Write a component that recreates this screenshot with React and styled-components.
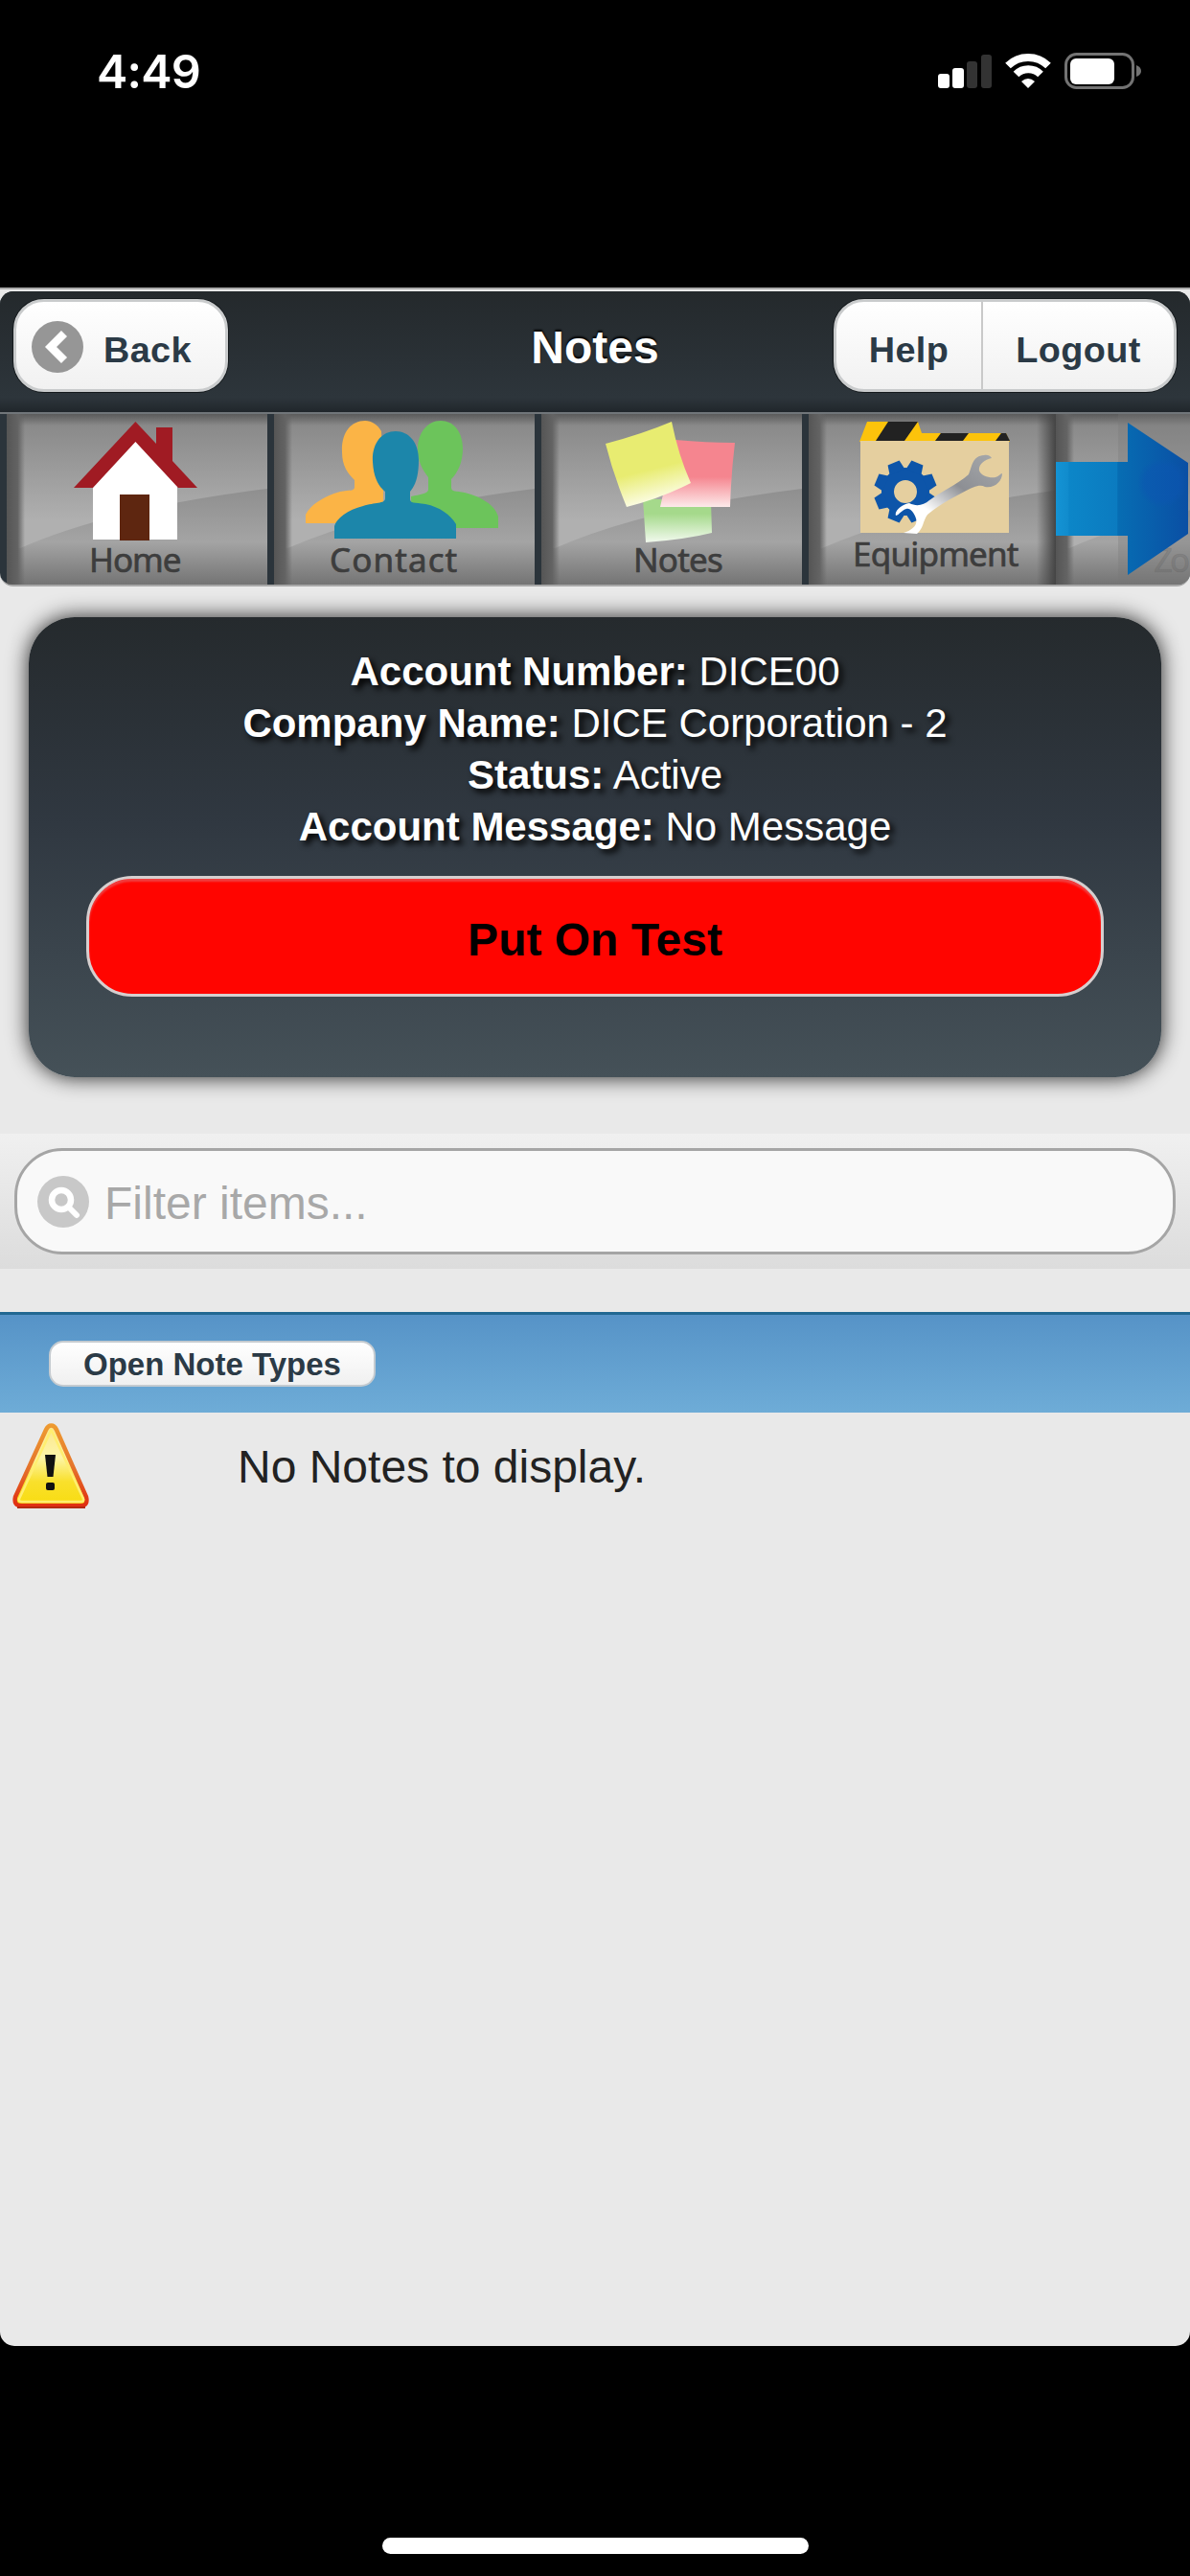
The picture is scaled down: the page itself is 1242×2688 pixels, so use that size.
import React from 'react';
import styled, { createGlobalStyle } from 'styled-components';

const Global = createGlobalStyle`
  * { box-sizing: border-box; }
  body { margin: 0; background: #000; }
`;

const Screen = styled.div`
  width: 1242px;
  height: 2688px;
  background: #000;
  display: flex;
  flex-direction: column;
  font-family: "Liberation Sans", Arial, sans-serif;
  overflow: hidden;
`;

const StatusBar = styled.div`
  height: 300px;
  flex: none;
  display: flex;
  justify-content: space-between;
  align-items: flex-start;
  padding: 46px 49px 0 101px;
`;
const Clock = styled.div`
  font: 600 48.5px/58px Inter, sans-serif;
  letter-spacing: -0.8px;
  color: #fff;
`;
const StatusIcons = styled.svg`
  display: block;
  margin-top: 8px;
`;

const Page = styled.main`
  height: 2148px;
  flex: none;
  background: #e9e9e9;
  border-radius: 0 0 15px 15px;
  padding-top: 2px;
  border-top: 2px solid #aaa;
`;

const TopPanel = styled.section`
  height: 308px;
  border-radius: 14px;
  overflow: hidden;
  background: #2b343b;
  border-bottom: 2px solid #a8a8a8;
`;
const Header = styled.header`
  height: 126px;
  padding: 8px 14px 0;
  display: grid;
  grid-template-columns: 1fr auto 1fr;
  align-items: start;
  background: linear-gradient(#24292c, #2d353b 88%, #20262b);
`;
const Title = styled.h1`
  margin: 23px 0 0;
  font-size: 48px;
  line-height: 56px;
  font-weight: 700;
  color: #fff;
  text-shadow: 0 -2px 2px #000;
`;
const ButtonGroup = styled.div`
  display: flex;
  width: max-content;
  height: 97px;
  border: 3px solid #c9cbcc;
  border-radius: 32px;
  overflow: hidden;
  background: linear-gradient(#fff, #f1f1f1);
  box-shadow: 0 0 0 1px #14191c;
  justify-self: ${(p) => p.$side};
`;
const HeaderButton = styled.button`
  width: ${(p) => p.$width}px;
  border: 0;
  border-left: ${(p) => (p.$divided ? '2px solid #c9c9c9' : '0')};
  padding: 8px 0 0;
  background: none;
  display: flex;
  align-items: center;
  justify-content: ${(p) => (p.$icon ? 'flex-start' : 'center')};
  gap: 21px;
  padding-left: ${(p) => (p.$icon ? '16px' : '0')};
  font: 700 37.8px/44px "Liberation Sans", Arial, sans-serif;
  letter-spacing: 0.4px;
  color: #2b3a46;
  svg { margin-top: -6px; }
`;

const Tiles = styled.nav`
  height: 180px;
  display: flex;
  padding-left: 7px;
  border-top: 2px solid #71767a;
`;
const Tile = styled.a`
  position: relative;
  flex: none;
  width: ${(p) => p.$width}px;
  height: 178px;
  margin-right: ${(p) => (p.$flush ? 0 : 7)}px;
  overflow: hidden;
  background: #909090;
`;
const Backdrop = styled.svg`
  position: absolute;
  inset: 0;
`;
const TileIcon = styled.svg`
  position: relative;
  display: block;
`;
const TileLabel = styled.span`
  position: absolute;
  left: ${(p) => p.$x}px;
  top: ${(p) => p.$y}px;
  font: 400 35px/48px "Noto Sans", "Open Sans", sans-serif;
  letter-spacing: ${(p) => p.$spacing}px;
  -webkit-text-stroke: 0.7px;
  color: ${(p) => (p.$faded ? 'rgba(70, 70, 70, 0.2)' : '#3d3d3d')};
  white-space: nowrap;
`;

const AccountCard = styled.section`
  margin: 32px 30px 0;
  height: 480px;
  border-radius: 48px;
  padding: 30px 60px 0;
  background: linear-gradient(#252a2d, #303841 45%, #455158);
  box-shadow: 0 0 22px #222;
  display: flex;
  flex-direction: column;
`;
const AccountLine = styled.div`
  font-size: 42px;
  line-height: 54px;
  text-align: center;
  color: #fff;
  text-shadow: 4px 4px 6px #000;
`;
const TestButton = styled.button`
  margin-top: 24px;
  height: 126px;
  border: 3px solid #d6cfcf;
  border-radius: 48px;
  background: #ff0500;
  box-shadow: inset 0 3px 2px #f04040;
  font: 700 48px/56px "Liberation Sans", Arial, sans-serif;
  color: #000;
  padding: 8px 0 0;
`;

const FilterBar = styled.form`
  margin-top: 59px;
  height: 141px;
  padding: 15px 15px 0;
  background: linear-gradient(#f0f0f0, #dcdcdc);
`;
const FilterField = styled.label`
  height: 111px;
  border: 3px solid #a5a5a5;
  border-radius: 50px;
  background: #f9f9f9;
  display: flex;
  align-items: center;
  gap: 16px;
  padding-left: 21px;
`;
const FilterInput = styled.input`
  flex: 1;
  border: 0;
  padding: 5px 0 0;
  background: none;
  outline: none;
  font: 400 48px/56px "Liberation Sans", Arial, sans-serif;
  &::placeholder { color: #a8a8a8; opacity: 1; }
`;

const NoteToolbar = styled.div`
  margin-top: 45px;
  height: 105px;
  border-top: 3px solid #226892;
  background: linear-gradient(#5693c7, #6eacd7);
  padding: 27px 51px 0;
`;
const NoteTypesButton = styled.button`
  display: block;
  width: 341px;
  height: 48px;
  border: 2px solid #c5cbd0;
  border-radius: 15px;
  background: linear-gradient(#fff, #f0f0f0);
  font: 700 33px/40px "Liberation Sans", Arial, sans-serif;
  color: #2b3a46;
  padding: 2px 0 0;
`;
const EmptyRow = styled.div`
  display: flex;
  padding: 9px 12px;
  gap: 154px;
`;
const EmptyText = styled.p`
  margin: 20px 0 0;
  font-size: 48px;
  line-height: 56px;
  color: #222;
`;
const BottomArea = styled.footer`
  flex: 1;
  display: flex;
  justify-content: center;
  align-items: flex-end;
  padding-bottom: 23px;
`;
const HomeIndicator = styled.div`
  width: 445px;
  height: 17px;
  border-radius: 9px;
  background: #fff;
`;

const TileBackdrop = ({ id, width, shaded }) => (
  <Backdrop width={width} height="178" viewBox={`0 0 ${width} 178`}>
    <defs>
      <linearGradient id={`${id}-gloss`} x1="0" y1="0" x2="0" y2="1">
        <stop offset="0" stopColor="#858585" />
        <stop offset="0.8" stopColor="#b0b0b0" />
      </linearGradient>
      <linearGradient id={`${id}-base`} x1="0" y1="0" x2="0" y2="1">
        <stop offset="0" stopColor="#858585" />
        <stop offset="0.4" stopColor="#8c8c8c" />
        <stop offset="0.75" stopColor="#a4a4a4" />
        <stop offset="1" stopColor="#747474" />
      </linearGradient>
      <linearGradient id={`${id}-left`}>
        <stop offset="0" stopColor="#555" />
        <stop offset="0.6" stopColor="#636363" />
        <stop offset="1" stopColor="#636363" stopOpacity="0" />
      </linearGradient>
      <linearGradient id={`${id}-top`} x1="0" y1="0" x2="0" y2="1">
        <stop offset="0" stopColor="#5c5c5c" />
        <stop offset="1" stopColor="#5c5c5c" stopOpacity="0" />
      </linearGradient>
      <linearGradient id={`${id}-right`}>
        <stop offset="0" stopColor="#444" stopOpacity="0" />
        <stop offset="1" stopColor="#444" />
      </linearGradient>
    </defs>
    <rect width={width} height="178" fill={`url(#${id}-base)`} />
    <path d="M0 0H272V78Q110 98 14 140H0Z" fill={`url(#${id}-gloss)`} />
    <rect width={width} height="12" fill={`url(#${id}-top)`} />
    <rect width="19" height="178" fill={`url(#${id}-left)`} />
    {shaded && <rect x={width - 20} width="20" height="178" fill={`url(#${id}-right)`} />}
  </Backdrop>
);

const HomeIcon = () => (
  <TileIcon width="272" height="178" viewBox="7 432 272 178">
    <path d="M97 506L141 458L185 506V563H97Z" fill="#fff" />
    <path d="M77 509L141.400 440L163 463V446H180V481L206 509H186L141.400 461L97 509Z" fill="#a01b23" />
    <rect x="125" y="516" width="31" height="48" fill="#5e2610" />
  </TileIcon>
);

const ContactIcon = () => (
  <TileIcon width="272" height="178" viewBox="286 432 272 178">
    <path d="M381 439C366 439 356 452 357 472C357 486 363 494 370 501V508C370 513 365 511 355 513C337 518 324 527 319 537V546H400V512L398 450C394 443 388 439 381 439Z" fill="#fbb446" />
    <path d="M460 439C446 439 436 452 436 468C436 482 441 490 447 498V511C447 515 438 516 429 518L430 551H520V539C516 526 501 518 485 514C476 512 471 514 471 508V500C478 493 483 482 483 468C483 450 473 439 460 439Z" fill="#6cc45b" />
    <path d="M413 450C398 450 388 463 389 482C390 500 396 508 402 513V520C402 526 391 524 379 528C363 532 351 541 349 549V562H476V547C470 537 459 529 444 526C432 524 428 526 428 520V513C434 506 437 496 437 480C437 462 427 450 413 450Z" fill="#1c86aa" />
  </TileIcon>
);

const NotesIcon = () => (
  <TileIcon width="272" height="178" viewBox="565 432 272 178">
    <defs>
      <linearGradient id="note-yellow" x1="0" y1="0" x2="0.25" y2="1">
        <stop offset="0.65" stopColor="#e8ec71" /><stop offset="1" stopColor="#fbfce0" />
      </linearGradient>
      <linearGradient id="note-pink" x1="0" y1="0" x2="0" y2="1">
        <stop offset="0.55" stopColor="#f5858f" /><stop offset="1" stopColor="#fdeaea" />
      </linearGradient>
      <linearGradient id="note-green" x1="0" y1="0" x2="0" y2="1">
        <stop offset="0.35" stopColor="#a5d98b" /><stop offset="1" stopColor="#f2faee" />
      </linearGradient>
    </defs>
    <path d="M671 520L742 524L743 556Q715 563 674 566Z" fill="url(#note-green)" />
    <path d="M705 459Q740 462 767 462Q763 495 762 529H689Z" fill="url(#note-pink)" />
    <path d="M632 463Q670 453 701 440Q708 475 721 504Q690 520 654 529Q640 495 632 463Z" fill="url(#note-yellow)" />
  </TileIcon>
);

const GEAR_TEETH = [0, 45, 90, 135, 180, 225, 270, 315];

const EquipmentIcon = () => (
  <TileIcon width="258" height="178" viewBox="844 432 258 178">
    <defs>
      <linearGradient id="wrench" x1="0" y1="1" x2="1" y2="0">
        <stop offset="0.3" stopColor="#fff" /><stop offset="0.6" stopColor="#8d8f94" /><stop offset="1" stopColor="#a9abad" />
      </linearGradient>
    </defs>
    <path d="M897 461L905 440H958L962 452H1050L1054 461Z" fill="#fcc30b" />
    <path d="M927 440H958L944 460H914ZM982 452H1011L1005 460H976ZM1045 452H1050L1054 460H1039Z" fill="#222" />
    <rect x="898" y="460" width="155" height="96" fill="#e5cf9f" />
    <g transform="translate(945 513)" fill="#0d55a9">
      <path fillRule="evenodd" d="M-25 0A25 25 0 1 0 25 0A25 25 0 1 0 -25 0ZM-12 0A12 12 0 1 1 12 0A12 12 0 1 1 -12 0Z" />
      {GEAR_TEETH.map((a) => (
        <path key={a} d="M-8.500 -22L-6.500 -32.500H6.500L8.500 -22Z" transform={`rotate(${a + 22.5})`} />
      ))}
    </g>
    <path d="M943 556C952 553 958 548 956 541C954 535 950 530 946 531C941 532 939 537 935 538C933 533 942 526 949 525C957 529 964 527 970 522C982 513 1000 505 1011 495C1015 485 1015 476 1027 475C1031 474 1034 476 1035 478C1027 480 1021 485 1022 491C1024 497 1033 499 1039 498C1043 497 1044 494 1046 494C1046 502 1038 510 1028 508C1021 504 1010 511 999 517C986 524 976 530 968 537C963 544 964 551 957 557Z" fill="url(#wrench)" />
  </TileIcon>
);

const ArrowIcon = () => (
  <TileIcon width="140" height="178" viewBox="1102 432 140 178">
    <defs>
      <linearGradient id="arrow-fill">
        <stop offset="0" stopColor="#1493d4" /><stop offset="0.09" stopColor="#118ccd" />
        <stop offset="0.1" stopColor="#0c86c8" /><stop offset="0.46" stopColor="#0b7bc0" />
        <stop offset="0.47" stopColor="#076db3" /><stop offset="1" stopColor="#0a4fa4" />
      </linearGradient>
      <radialGradient id="arrow-spot">
        <stop offset="0.7" stopColor="#0c55b2" stopOpacity="0.5" /><stop offset="1" stopColor="#0c55b2" stopOpacity="0" />
      </radialGradient>
    </defs>
    <rect x="1167" y="432" width="75" height="178" fill="#777" opacity="0.3" />
    <path d="M1102 482H1177V441L1240 483V557L1177 600V559H1102Z" fill="url(#arrow-fill)" />
    <circle cx="1213" cy="504" r="26" fill="url(#arrow-spot)" />
  </TileIcon>
);

export default function App() {
  return (
    <Screen>
      <Global />
      <StatusBar>
        <Clock>4:49</Clock>
        <StatusIcons width="214" height="40" viewBox="979 54 214 40">
          <rect x="979" y="77" width="12" height="15" rx="3" fill="#fff" />
          <rect x="994" y="71" width="12" height="21" rx="3" fill="#fff" />
          <rect x="1009" y="64" width="11" height="28" rx="3" fill="#333" />
          <rect x="1024" y="57" width="11" height="35" rx="3" fill="#333" />
          <g fill="none" stroke="#fff" strokeWidth="8">
            <path d="M1052 68.500A30 30 0 0 1 1094 68.500" />
            <path d="M1060.500 77.500A18 18 0 0 1 1086 77.500" />
          </g>
          <path d="M1066 85Q1073 79 1080 85L1073 92Z" fill="#fff" />
          <rect x="1112.500" y="56.500" width="70" height="35" rx="11" fill="none" stroke="#737373" strokeWidth="3" />
          <rect x="1117" y="61" width="46" height="27" rx="6" fill="#fff" />
          <path d="M1186 68Q1191 70 1191 74Q1191 78 1186 80Z" fill="#737373" />
        </StatusIcons>
      </StatusBar>
      <Page>
        <TopPanel>
          <Header>
            <ButtonGroup $side="start">
              <HeaderButton $width={218} $icon>
                <svg width="54" height="54" viewBox="0 0 54 54">
                  <circle cx="27" cy="27" r="27" fill="#969696" />
                  <path d="M34 13L20 27L34 41" fill="none" stroke="#fff" strokeWidth="8.500" />
                </svg>
                Back
              </HeaderButton>
            </ButtonGroup>
            <Title>Notes</Title>
            <ButtonGroup $side="end">
              <HeaderButton $width={151}>Help</HeaderButton>
              <HeaderButton $width={201} $divided>Logout</HeaderButton>
            </ButtonGroup>
          </Header>
          <Tiles>
            <Tile $width={272}>
              <TileBackdrop id="home" width={272} />
              <HomeIcon />
              <TileLabel $x={86} $y={128} $spacing={-1}>Home</TileLabel>
            </Tile>
            <Tile $width={272}>
              <TileBackdrop id="contact" width={272} />
              <ContactIcon />
              <TileLabel $x={58} $y={128} $spacing={1.1}>Contact</TileLabel>
            </Tile>
            <Tile $width={272}>
              <TileBackdrop id="notes" width={272} />
              <NotesIcon />
              <TileLabel $x={96} $y={128} $spacing={-0.8}>Notes</TileLabel>
            </Tile>
            <Tile $width={258} $flush>
              <TileBackdrop id="equipment" width={258} shaded />
              <EquipmentIcon />
              <TileLabel $x={46} $y={122} $spacing={-0.8}>Equipment</TileLabel>
            </Tile>
            <Tile $width={140}>
              <TileBackdrop id="zones" width={140} />
              <TileLabel $x={102} $y={128} $spacing={-3} $faded>Zo</TileLabel>
              <ArrowIcon />
            </Tile>
          </Tiles>
        </TopPanel>
        <AccountCard>
          <AccountLine><b>Account Number:</b> DICE00</AccountLine>
          <AccountLine><b>Company Name:</b> DICE Corporation - 2</AccountLine>
          <AccountLine><b>Status:</b> Active</AccountLine>
          <AccountLine><b>Account Message:</b> No Message</AccountLine>
          <TestButton>Put On Test</TestButton>
        </AccountCard>
        <FilterBar>
          <FilterField>
            <svg width="54" height="54" viewBox="0 0 54 54">
              <circle cx="27" cy="27" r="27" fill="#c8c8c8" />
              <circle cx="25" cy="25" r="10" fill="none" stroke="#fff" strokeWidth="6.500" />
              <path d="M32 32L41 41" stroke="#fff" strokeWidth="6" strokeLinecap="round" />
            </svg>
            <FilterInput placeholder="Filter items..." />
          </FilterField>
        </FilterBar>
        <NoteToolbar>
          <NoteTypesButton>Open Note Types</NoteTypesButton>
        </NoteToolbar>
        <EmptyRow>
          <svg width="82" height="92" viewBox="12 1482 82 92">
            <defs>
              <linearGradient id="warn-fill" x1="0" y1="0" x2="0" y2="1">
                <stop offset="0" stopColor="#fbe58c" /><stop offset="0.4" stopColor="#fdf5a8" /><stop offset="0.7" stopColor="#f9e02c" /><stop offset="1" stopColor="#f8dc10" />
              </linearGradient>
              <linearGradient id="warn-edge" x1="0" y1="0" x2="0" y2="1">
                <stop offset="0" stopColor="#ee9a30" /><stop offset="0.5" stopColor="#e5762c" /><stop offset="1" stopColor="#e02f12" />
              </linearGradient>
            </defs>
            <path d="M53.500 1486.500Q57 1486.500 59 1491L90 1561Q92 1570 85 1570H22Q14 1570 16 1561L48 1491Q50 1486.500 53.500 1486.500Z" fill="url(#warn-fill)" stroke="url(#warn-edge)" strokeWidth="4.500" />
            <path d="M53.500 1491L20 1563Q19 1566 23 1566H84Q88 1566 87 1563Z" fill="none" stroke="#ffee70" strokeWidth="2.500" strokeLinejoin="round" />
            <path d="M18 1572H89" stroke="#b52a12" strokeWidth="2" />
            <path d="M47 1517H58L55.500 1540H49.500Z" fill="#111" />
            <rect x="48" y="1546" width="9" height="8" rx="2" fill="#111" />
          </svg>
          <EmptyText>No Notes to display.</EmptyText>
        </EmptyRow>
      </Page>
      <BottomArea>
        <HomeIndicator />
      </BottomArea>
    </Screen>
  );
}
